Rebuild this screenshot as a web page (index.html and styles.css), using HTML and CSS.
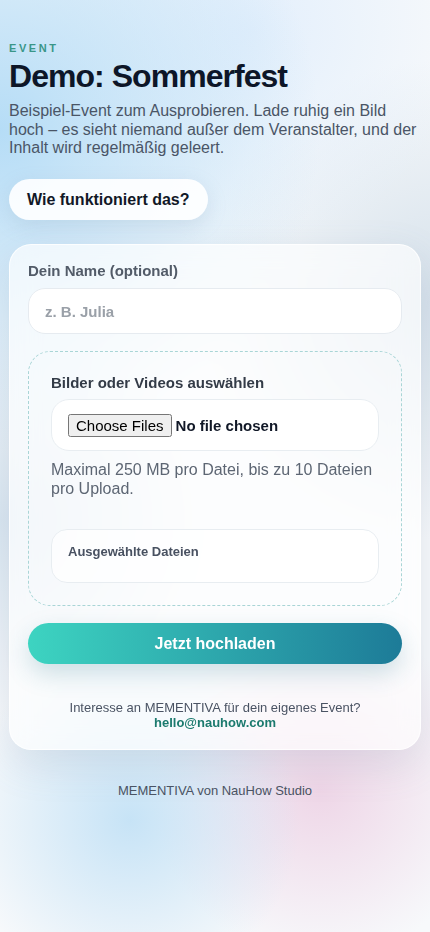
FILE: index.html
```html
<!DOCTYPE html>
<html lang="de">
<head>
  <meta charset="UTF-8" />
  <meta name="viewport" content="width=device-width, initial-scale=1" />
  <title>Demo: Sommerfest – MEMENTIVA</title>
  <link rel="stylesheet" href="styles.css">
</head>
<body>
  <div class="page">
    <header class="intro">
      <p class="eyebrow">Event</p>
      <h1>Demo: Sommerfest</h1>
      <p class="lead">Beispiel-Event zum Ausprobieren. Lade ruhig ein Bild hoch – es sieht niemand außer dem Veranstalter, und der Inhalt wird regelmäßig geleert.</p>
      <button class="help-btn" type="button">Wie funktioniert das?</button>
    </header>

    <form class="card">
      <label class="field-label" for="name">Dein Name (optional)</label>
      <input class="text-input" type="text" id="name" placeholder="z. B. Julia" />

      <div class="dropzone">
        <label class="drop-title" for="files">Bilder oder Videos auswählen</label>
        <div class="file-box">
          <input type="file" id="files" multiple />
        </div>
        <p class="hint">Maximal 250 MB pro Datei, bis zu 10 Dateien pro Upload.</p>

        <div class="selected">
          <p class="selected-title">Ausgewählte Dateien</p>
        </div>
      </div>

      <button class="upload-btn" type="button">Jetzt hochladen</button>

      <div class="contact">
        <p>Interesse an MEMENTIVA für dein eigenes Event?</p>
        <a href="mailto:hello@nauhow.com">hello@nauhow.com</a>
      </div>
    </form>

    <footer class="footer">MEMENTIVA von NauHow Studio</footer>
  </div>
</body>
</html>
```

FILE: styles.css
```css
* {
  box-sizing: border-box;
}

body {
  margin: 0;
  font-family: "Liberation Sans", Arial, sans-serif;
  color: #0f172a;
  background-color: #f7f9fb;
  background-image:
    radial-gradient(circle at 0px 130px, rgba(178, 219, 246, 0.95), rgba(178, 219, 246, 0) 320px),
    radial-gradient(circle at 250px 30px, rgba(225, 238, 252, 0.9), rgba(225, 238, 252, 0) 220px),
    radial-gradient(circle at 440px 300px, rgba(212, 224, 234, 0.95), rgba(212, 224, 234, 0) 240px),
    radial-gradient(circle at 0px 520px, rgba(214, 228, 240, 0.9), rgba(214, 228, 240, 0) 200px),
    radial-gradient(circle at 130px 820px, rgba(196, 226, 246, 0.95), rgba(196, 226, 246, 0) 170px),
    radial-gradient(circle at 320px 790px, rgba(238, 212, 230, 0.95), rgba(238, 212, 230, 0) 170px);
  min-height: 932px;
}

.page {
  padding: 42px 9px 40px;
}

.intro {
  margin-bottom: 24px;
}

.eyebrow {
  margin: 0;
  font-size: 11px;
  font-weight: bold;
  letter-spacing: 2.6px;
  text-transform: uppercase;
  color: #3a9688;
}

h1 {
  margin: 5px 0 8px;
  font-size: 32px;
  line-height: 1.1;
  letter-spacing: -0.03em;
  color: #0d1628;
}

.lead {
  margin: 0;
  font-size: 16px;
  line-height: 1.15;
  color: #4a5566;
}

.help-btn {
  margin-top: 22px;
  padding: 0 18px;
  height: 41px;
  border: 0;
  border-radius: 999px;
  background: rgba(255, 255, 255, 0.9);
  box-shadow: 0 6px 20px rgba(120, 150, 180, 0.18);
  font-family: inherit;
  font-size: 16px;
  font-weight: bold;
  color: #111827;
}

.card {
  display: flex;
  flex-direction: column;
  padding: 17px 18px 18px;
  border-radius: 22px;
  background: rgba(255, 255, 255, 0.66);
  border: 1px solid rgba(255, 255, 255, 0.8);
  box-shadow: 0 14px 40px rgba(100, 120, 150, 0.16);
  backdrop-filter: blur(14px);
}

.field-label {
  font-size: 15px;
  font-weight: bold;
  color: #525b68;
}

.text-input {
  margin-top: 9px;
  height: 46px;
  padding: 0 16px;
  border: 1px solid #e6ebf0;
  border-radius: 17px;
  background: #fff;
  font-family: inherit;
  font-size: 15px;
  font-weight: bold;
  color: #111827;
}

.text-input::placeholder {
  color: #9aa0a8;
}

.dropzone {
  margin-top: 17px;
  padding: 22px;
  border: 1px dashed #a9d5d6;
  border-radius: 22px;
  display: flex;
  flex-direction: column;
}

.drop-title {
  font-size: 15px;
  font-weight: bold;
  color: #333b47;
}

.file-box {
  margin-top: 8px;
  height: 52px;
  display: flex;
  align-items: center;
  padding: 0 16px;
  border: 1px solid #e8edf1;
  border-radius: 18px;
  background: #fff;
}

.file-box input {
  font-family: inherit;
  font-size: 15px;
  font-weight: bold;
  color: #111827;
}

.file-box input::file-selector-button {
  font-family: inherit;
  font-size: 15px;
  font-weight: normal;
  margin-right: 4px;
}

.hint {
  margin: 10px 0 0;
  font-size: 16px;
  line-height: 1.15;
  color: #5d6673;
}

.selected {
  margin-top: 31px;
  height: 54px;
  padding: 14px 16px;
  border: 1px solid #e8edf1;
  border-radius: 16px;
  background: rgba(255, 255, 255, 0.7);
}

.selected-title {
  margin: 0;
  font-size: 13px;
  font-weight: bold;
  color: #485161;
}

.upload-btn {
  margin-top: 17px;
  height: 41px;
  border: 0;
  border-radius: 999px;
  background: linear-gradient(90deg, #3dd4c1, #1d7b98);
  box-shadow: 0 10px 24px rgba(40, 120, 140, 0.22);
  font-family: inherit;
  font-size: 16px;
  font-weight: bold;
  color: #fff;
}

.contact {
  margin-top: 37px;
  text-align: center;
  font-size: 13px;
  line-height: 1.15;
  color: #4a5363;
}

.contact p {
  margin: 0;
}

.contact a {
  font-weight: bold;
  color: #1b7a6e;
  text-decoration: none;
}

.footer {
  margin-top: 33px;
  text-align: center;
  font-size: 13px;
  color: #4a5363;
}
```
